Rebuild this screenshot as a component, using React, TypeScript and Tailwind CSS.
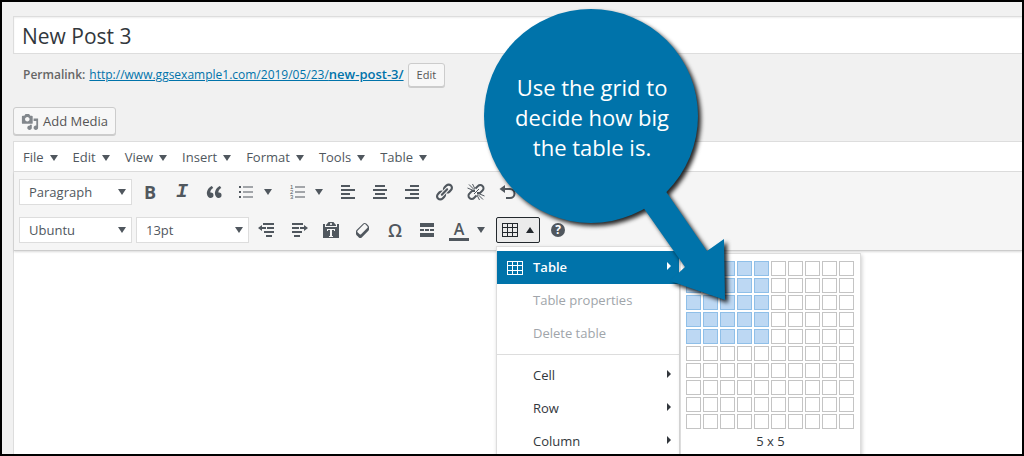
import React from 'react';

interface IconProps {
  d: string;
  className?: string;
}

function Icon({ d, className = 'size-5' }: IconProps) {
  return (
    <svg viewBox="0 0 20 20" className={className} fill="currentColor" fillRule="evenodd" aria-hidden="true">
      <path d={d} />
    </svg>
  );
}

const icons = {
  media:
    'M13 11V4c0-.55-.45-1-1-1h-1.67L9 1H5L3.67 3H2c-.55 0-1 .45-1 1v7c0 .55.45 1 1 1h10c.55 0 1-.45 1-1zM7 4.5c1.38 0 2.5 1.12 2.5 2.5S8.38 9.5 7 9.5 4.5 8.38 4.5 7 5.62 4.5 7 4.5zM14 6h5v10.5c0 1.38-1.12 2.5-2.5 2.5S14 17.88 14 16.5s1.12-2.5 2.5-2.5c.17 0 .34.02.5.05V9h-3V6zm-4 8.05V13h2v3.5c0 1.38-1.12 2.5-2.5 2.5S7 17.88 7 16.5 8.12 14 9.5 14c.17 0 .34.02.5.05z',
  quote:
    'M9.49 13.22c0-.74-.2-1.38-.61-1.9-.62-.78-1.83-.88-2.53-.72-.29-1.65 1.11-3.75 2.92-4.65L7.88 4c-2.73 1.3-5.42 4.28-4.96 8.05C3.21 14.43 4.59 16 6.54 16c.85 0 1.56-.25 2.12-.75s.83-1.18.83-2.03zm8.05 0c0-.74-.2-1.38-.61-1.9-.63-.78-1.83-.88-2.53-.72-.29-1.65 1.11-3.75 2.92-4.65L15.93 4c-2.73 1.3-5.41 4.28-4.95 8.05.29 2.38 1.66 3.95 3.61 3.95.85 0 1.56-.25 2.12-.75s.83-1.18.83-2.03z',
  bullets: 'M3 4h2v2H3zM7 4.5h10v1H7zM3 9h2v2H3zM7 9.5h10v1H7zM3 14h2v2H3zM7 14.5h10v1H7z',
  alignLeft: 'M3 3h9v2H3zM3 7h14v2H3zM3 11h9v2H3zM3 15h14v2H3z',
  alignCenter: 'M5 3h10v2H5zM3 7h14v2H3zM5 11h10v2H5zM3 15h14v2H3z',
  alignRight: 'M8 3h9v2H8zM3 7h14v2H3zM8 11h9v2H8zM3 15h14v2H3z',
  link: 'M17.74 2.76c1.68 1.69 1.68 4.41 0 6.1l-1.53 1.52c-1.12 1.12-2.7 1.47-4.14 1.09l2.62-2.61.76-.77.76-.76c.84-.84.84-2.2 0-3.04-.84-.85-2.2-.85-3.04 0l-.77.76-3.38 3.38c-.37-1.44-.02-3.02 1.1-4.14l1.52-1.53c1.69-1.68 4.42-1.68 6.1 0zM8.59 13.43l5.34-5.34c.42-.42.42-1.1 0-1.52-.44-.43-1.13-.39-1.53 0l-5.33 5.34c-.42.42-.42 1.1 0 1.52.44.43 1.13.39 1.52 0zm-.76 2.29l4.14-4.15c.38 1.44.03 3.02-1.09 4.14l-1.52 1.53c-1.69 1.68-4.41 1.68-6.1 0-1.68-1.68-1.68-4.42 0-6.1l1.53-1.52c1.12-1.12 2.7-1.47 4.14-1.1l-4.14 4.15c-.85.84-.85 2.2 0 3.05.84.84 2.2.84 3.04 0z',
  undo: 'M7 3v3h5a5.5 5.500 0 0 1 0 11H8v-2h4a3.500 3.500 0 0 0 0-7H7v3L1.500 7z',
  outdent: 'M1 8 5 5v2h4v2H5v2zM6 3h11v2H6zM10 7h7v2h-7zM7 11h10v2H7zM9 15h6v2H9z',
  indent: 'M19 8l-4-3v2h-4v2h4v2zM3 3h11v2H3zM3 7h7v2H3zM3 11h10v2H3zM5 15h6v2H5z',
  paste:
    'M12.38 2 15 5v1H5V5l2.64-3h4.74zM10 5c.55 0 1-.44 1-1 0-.55-.45-1-1-1s-1 .45-1 1c0 .56.45 1 1 1zM2 4h2v3h12V4h2v14H2zM6 9v2h1v-1h2v6H8v1h4v-1h-1v-6h2v1h1V9z',
  eraser:
    'M14.29 4.59l1.1 1.11c.41.4.61.94.61 1.47v2.12c0 .53-.2 1.07-.61 1.47l-6.63 6.63c-.4.41-.94.61-1.47.61s-1.07-.2-1.47-.61l-1.11-1.1-1.1-1.11c-.41-.4-.61-.94-.61-1.47v-2.12c0-.54.2-1.07.61-1.48l6.63-6.62c.4-.41.94-.61 1.47-.61s1.06.2 1.47.61zm-6.21 9.7l6.42-6.42c.39-.39.39-1.03 0-1.43L12.36 4.3c-.19-.19-.45-.29-.72-.29s-.52.1-.71.29l-6.42 6.42c-.39.4-.39 1.04 0 1.43l2.14 2.14c.38.38 1.04.38 1.43 0z',
  more: 'M3 3h14v4H3zM3 9h4v2H3zM8 9h4v2H8zM13 9h4v2h-4zM3 13h14v4H3z',
  table: 'M2 3h16v14H2zM3 4v3h4V4zM8 4v3h4V4zM13 4v3h4V4zM3 8v4h4V8zM8 8v4h4V8zM13 8v4h4V8zM3 13v3h4v-3zM8 13v3h4v-3zM13 13v3h4v-3z',
};

function NumberedIcon() {
  return (
    <svg viewBox="0 0 20 20" className="size-5" fill="currentColor" aria-hidden="true">
      <path d="M8 4.5h10v1H8zM8 9.5h10v1H8zM8 14.5h10v1H8z" />
      <g fontFamily="Liberation Sans" fontSize="6">
        <text x="3" y="7">1</text>
        <text x="3" y="12">2</text>
        <text x="3" y="17">3</text>
      </g>
    </svg>
  );
}

function UnlinkIcon() {
  return (
    <svg viewBox="0 0 20 20" className="size-5" fill="none" stroke="currentColor" aria-hidden="true">
      <path
        strokeWidth="2"
        d="M9.5 6.5l2.500-2.500a3 3 0 0 1 4.500 0 3 3 0 0 1 0 4.500L14 11h-3M10.500 13.500 8 16a3 3 0 0 1-4.500 0 3 3 0 0 1 0-4.500L6 9h3"
      />
      <path strokeWidth="1" d="M3 2.500l5.500 5.500M6.500 2l2.500 5M1.500 6l6 2.500M17 17.500l-5.500-5.500M13.500 18l-2.500-5M18.500 14l-6-2.500M8 12l5-5" />
    </svg>
  );
}

function Caret({ up = false }: { up?: boolean }) {
  return (
    <svg viewBox="0 0 8 6" className="h-1.5 w-2 shrink-0" fill="currentColor" aria-hidden="true">
      <path d={up ? 'M4 0 8 6H0z' : 'M0 0h8L4 6z'} />
    </svg>
  );
}

function ToolButton({ label, children }: { label: string; children: React.ReactNode }) {
  return (
    <button type="button" aria-label={label} className="flex h-[26px] w-8 items-center justify-center">
      {children}
    </button>
  );
}

function SplitButton({ label, children }: { label: string; children: React.ReactNode }) {
  return (
    <div className="flex w-[51px]">
      <ToolButton label={label}>{children}</ToolButton>
      <button type="button" aria-label={`${label} options`} className="flex w-3 items-center justify-center">
        <Caret />
      </button>
    </div>
  );
}

function ToolSelect({ label, value }: { label: string; value: string }) {
  return (
    <div className="relative">
      <select
        aria-label={label}
        defaultValue={value}
        className="block h-[26px] w-[113px] appearance-none border border-[#ddd] bg-white px-[9px] text-[13px] leading-6"
      >
        <option>{value}</option>
      </select>
      <div className="pointer-events-none absolute inset-y-0 right-1.5 flex items-center">
        <Caret />
      </div>
    </div>
  );
}

interface MenuItemProps {
  label: string;
  active?: boolean;
  disabled?: boolean;
  submenu?: boolean;
}

function MenuItem({ label, active, disabled, submenu }: MenuItemProps) {
  const color = active
    ? 'bg-[#0073aa] font-semibold text-white'
    : disabled
      ? 'text-[#a0a5aa]'
      : 'text-[#32373c]';
  return (
    <button type="button" disabled={disabled} className={`flex h-[33px] w-full items-center px-2 text-left ${color}`}>
      <span className="w-7">{active && <Icon d={icons.table} />}</span>
      <span className="flex-1 text-[13px]">{label}</span>
      {submenu && (
        <svg viewBox="0 0 4 8" className="mb-1 h-2 w-1" fill="currentColor" aria-hidden="true">
          <path d="M0 0l4 4-4 4z" />
        </svg>
      )}
    </button>
  );
}

function SizeGrid({ cols, rows }: { cols: number; rows: number }) {
  const cells = Array.from({ length: 100 }, (_, i) => i % 10 < cols && Math.floor(i / 10) < rows);
  return (
    <div className="absolute top-1.5 left-full ml-px w-[181px] border border-[#ddd] bg-white px-[5px] py-[7px] text-[#32373c] shadow-[1px_2px_4px_rgba(0,0,0,0.2)]">
      <div className="grid grid-cols-[repeat(10,15px)] gap-0.5">
        {cells.map((on, i) => (
          <button
            key={i}
            type="button"
            aria-label={`${(i % 10) + 1} x ${Math.floor(i / 10) + 1}`}
            className={`size-[15px] border ${on ? 'border-[#8fbfe8] bg-[#bdd8f3]' : 'border-[#c4c4c4] bg-white'}`}
          />
        ))}
      </div>
      <div className="pt-0.5 text-center text-[13px] leading-5">
        {cols} x {rows}
      </div>
    </div>
  );
}

function TableMenu() {
  return (
    <div className="absolute top-full left-0 z-10 mt-[3px] w-[184px] border border-[#ddd] bg-white py-1 shadow-[1px_2px_4px_rgba(0,0,0,0.2)]">
      <MenuItem label="Table" active submenu />
      <MenuItem label="Table properties" disabled />
      <MenuItem label="Delete table" disabled />
      <div className="my-1 border-t border-[#ddd]" />
      <MenuItem label="Cell" submenu />
      <MenuItem label="Row" submenu />
      <MenuItem label="Column" submenu />
      <SizeGrid cols={5} rows={5} />
    </div>
  );
}

function Callout() {
  return (
    <div className="pointer-events-none absolute top-0 left-[482px] z-20 h-[310px] w-[260px]">
      <svg
        viewBox="484 2 260 310"
        className="absolute inset-0 size-full overflow-visible drop-shadow-[3px_3px_2px_rgba(0,0,0,0.85)]"
        fill="#0073aa"
        aria-hidden="true"
      >
        <circle cx="591" cy="116" r="107" />
        <path d="M620 172 645 210 685 267 670 281 725 300 724 239 707 251 667 193 640 155z" />
      </svg>
      <p className="relative mt-[70px] w-[216px] text-center text-[22px] leading-[30px] text-white">
        Use the grid to
        <br />
        decide how big
        <br />
        the table is.
      </p>
    </div>
  );
}

const menus = ['File', 'Edit', 'View', 'Insert', 'Format', 'Tools', 'Table'];

export default function App() {
  return (
    <div className="relative flex h-screen flex-col overflow-hidden border-2 border-black bg-[#f1f1f1] pt-3.5 pl-[11px] font-['Open_Sans','Noto_Sans',sans-serif] text-[13px] text-[#444]">
      <input
        aria-label="Post title"
        defaultValue="New Post 3"
        className="h-[38px] w-full border border-r-0 border-[#ddd] bg-white px-2 pt-0.5 text-[21px] text-[#32373c] shadow-[inset_0_1px_2px_rgba(0,0,0,0.07)]"
      />
      <div className="mt-2 flex h-[26px] items-center gap-1 pl-2.5 text-[#666]">
        <strong className="text-[12px] font-semibold">Permalink:</strong>
        <a href="#post" className="text-[12px] text-[#0073aa] underline">
          http://www.ggsexample1.com/2019/05/23/<span className="text-[13px] font-semibold">new-post-3/</span>
        </a>
        <button
          type="button"
          className="h-6 rounded-[3px] border border-[#ccc] bg-[#f7f7f7] px-2 text-[11px] text-[#555] shadow-[0_1px_0_#ccc]"
        >
          Edit
        </button>
      </div>
      <button
        type="button"
        className="mt-[19px] flex h-7 shrink-0 items-center gap-1 self-start rounded-[3px] border border-[#ccc] bg-[#f7f7f7] px-[7px] pt-px text-[13px] text-[#555] shadow-[0_1px_0_#ccc]"
      >
        <span className="text-[#82878c]">
          <Icon d={icons.media} className="size-[18px]" />
        </span>
        Add Media
      </button>

      <div className="mt-1.5 flex flex-1 flex-col border-t border-l border-[#ddd] bg-white text-[#50575e]">
        <div className="flex h-[30px] items-center gap-[15px] border-b border-[#ddd] pt-0.5 pl-[9px]">
          {menus.map((name) => (
            <button key={name} type="button" className="flex items-center gap-1.5">
              {name}
              <Caret />
            </button>
          ))}
        </div>
        <div className="flex flex-col gap-3 border-b border-[#ccc] bg-[#f5f5f5] py-[7px] pl-[5px] shadow-[0_1px_2px_rgba(0,0,0,0.15)]">
          <div className="flex">
            <div className="mr-0.5">
              <ToolSelect label="Block format" value="Paragraph" />
            </div>
            <ToolButton label="Bold">
              <span className="text-[18px] leading-5 font-bold">B</span>
            </ToolButton>
            <ToolButton label="Italic">
              <span className="font-['Liberation_Mono',monospace] text-[20px] leading-5 font-bold italic">I</span>
            </ToolButton>
            <ToolButton label="Blockquote">
              <Icon d={icons.quote} />
            </ToolButton>
            <SplitButton label="Bulleted list">
              <Icon d={icons.bullets} />
            </SplitButton>
            <SplitButton label="Numbered list">
              <NumberedIcon />
            </SplitButton>
            <ToolButton label="Align left">
              <Icon d={icons.alignLeft} />
            </ToolButton>
            <ToolButton label="Align center">
              <Icon d={icons.alignCenter} />
            </ToolButton>
            <ToolButton label="Align right">
              <Icon d={icons.alignRight} />
            </ToolButton>
            <ToolButton label="Insert link">
              <Icon d={icons.link} />
            </ToolButton>
            <ToolButton label="Remove link">
              <UnlinkIcon />
            </ToolButton>
            <ToolButton label="Undo">
              <Icon d={icons.undo} />
            </ToolButton>
          </div>
          <div className="flex">
            <div className="mr-0.5 flex gap-1">
              <ToolSelect label="Font family" value="Ubuntu" />
              <ToolSelect label="Font size" value="13pt" />
            </div>
            <ToolButton label="Decrease indent">
              <Icon d={icons.outdent} />
            </ToolButton>
            <ToolButton label="Increase indent">
              <Icon d={icons.indent} />
            </ToolButton>
            <ToolButton label="Paste as text">
              <Icon d={icons.paste} />
            </ToolButton>
            <ToolButton label="Clear formatting">
              <Icon d={icons.eraser} />
            </ToolButton>
            <ToolButton label="Special character">
              <span className="text-[18px] leading-5 font-semibold">Ω</span>
            </ToolButton>
            <ToolButton label="Read more">
              <Icon d={icons.more} />
            </ToolButton>
            <SplitButton label="Text color">
              <span className="w-5 border-b-[3px] border-current text-[16px] leading-[18px] font-semibold">A</span>
            </SplitButton>
            <div className="relative mx-0.5">
              <button
                type="button"
                aria-label="Table"
                aria-expanded="true"
                className="flex h-[26px] w-11 items-center gap-1.5 rounded-[2px] border border-[#23282d] bg-[#ebebeb] pl-[3px] text-[#23282d]"
              >
                <Icon d={icons.table} />
                <Caret up />
              </button>
              <TableMenu />
            </div>
            <ToolButton label="Help">
              <span className="size-3.5 rounded-full bg-current">
                <span className="block text-center text-[12px] leading-3.5 font-bold text-white">?</span>
              </span>
            </ToolButton>
          </div>
        </div>
      </div>
      <Callout />
    </div>
  );
}
